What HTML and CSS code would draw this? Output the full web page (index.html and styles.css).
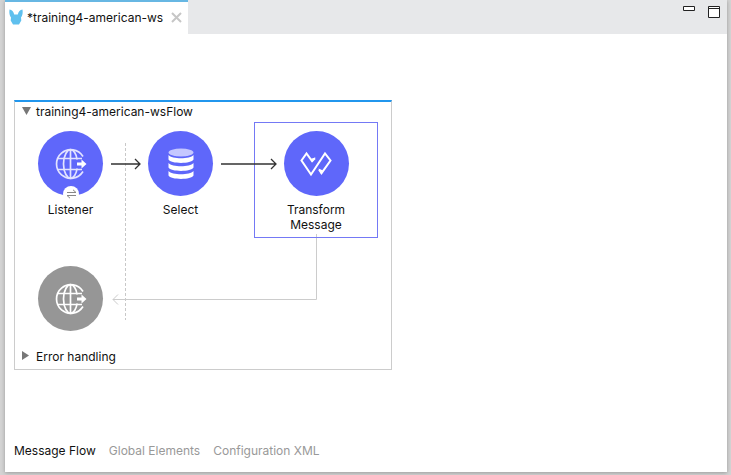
FILE: index.html
```html
<!DOCTYPE html>
<html lang="en">
<head>
<meta charset="utf-8">
<title>training4-american-ws</title>
<link rel="stylesheet" href="styles.css">
</head>
<body>
<svg class="symbols" aria-hidden="true">
  <symbol id="globe" viewBox="0 0 32 32">
    <g fill="none" stroke="currentColor" stroke-width="1.7">
      <path d="M28 8.500A14.300 14.300 0 1 0 28 23.500"/>
      <path d="M22 11.500C21.500 6 18.500 1.700 15.500 1.700S8.500 7 8.500 16s4 14.300 7 14.300S21.500 26 22 20.500"/>
      <path d="M15.500 1.700v28.600M3 10.500h24M3 21.500h24"/>
    </g>
    <path fill="#fff" d="M22 14.500h4.500v-3L31.500 16l-5 4.500v-3H22z"/>
  </symbol>
</svg>
<div class="editor">
  <header class="tabbar">
    <div class="tab">
      <svg class="mule" viewBox="0 0 14 16" aria-hidden="true"><path fill="#5fc0ee" d="M.5.500C3 .8 4.500 2.500 5.200 5.500h3.600C9.500 2.500 11 .8 13.500.500 14 4 13.500 6.500 12 8.500l.3 3L10 15.500H4L1.700 11.500l.3-3C.5 6.500 0 4 .5.500z"/></svg>
      <span>*training4-american-ws</span>
      <button class="icon-button close" aria-label="Close tab"><svg width="11" height="11" viewBox="0 0 11 11"><path d="M1 1l9 9M10 1l-9 9" stroke="#c6c6c6" stroke-width="2"/></svg></button>
    </div>
    <div class="window-actions">
      <button class="icon-button" aria-label="Minimize"><svg width="12" height="12" viewBox="0 0 12 12"><path d="M.5.500h11v4H.500z" fill="#fff" stroke="#222"/></svg></button>
      <button class="icon-button" aria-label="Maximize"><svg width="12" height="12" viewBox="0 0 12 12"><path d="M.5.500h11v11H.500zM.5 2.500h11" fill="#fff" stroke="#222"/></svg></button>
    </div>
  </header>
  <main class="workspace">
    <section class="flow">
      <button class="section-title"><svg width="9" height="8" viewBox="0 0 9 8"><path d="M0 0h9L4.500 8z" fill="#777"/></svg>training4-american-wsFlow</button>
      <div class="canvas">
        <svg class="wires" viewBox="0 0 376 223" aria-hidden="true">
          <g fill="none">
            <path d="M110.500 21v177" stroke="#c8c8c8" stroke-dasharray="3 2"/>
            <path d="M301.500 112v65.500H98M103 172.500l-5 5 5 5" stroke="#ccc"/>
          </g>
        </svg>
        <div class="node listener">
          <div class="disc"><svg width="32" height="32"><use href="#globe"/></svg>
            <span class="badge"><svg width="11" height="10" viewBox="0 0 11 10"><path d="M1 3.500h9L7 .8M10 6.500H1l3 2.700" fill="none" stroke="#888"/></svg></span>
          </div>
          <span>Listener</span>
        </div>
        <div class="node select">
          <div class="disc"><svg width="26" height="32" viewBox="0 0 26 32"><ellipse cx="13" cy="4.500" rx="12.500" ry="4" fill="#c5c7ff"/><g fill="#fff"><path id="band" d="M.5 7C4 11.300 22 11.300 25.500 7v4.500c-2 4.500-23 4.500-25 0z"/><use href="#band" y="8"/><use href="#band" y="16"/></g></svg></div>
          <span>Select</span>
        </div>
        <div class="node transform">
          <div class="disc"><svg width="32" height="26" viewBox="0 0 32 26"><path d="M15 7.200L12 10 6.500 2.500 1.500 9.500 11 23.500 25 2.500l5.500 7-9 12.700L19 18.500" fill="none" stroke="#fff" stroke-width="2"/><path d="M10 8l5.500-1.500-3 5zM18.500 17.500l4.500 2-2 3.500z" fill="#fff"/></svg></div>
          <span>Transform Message</span>
        </div>
        <div class="node response">
          <div class="disc"><svg width="32" height="32"><use href="#globe"/></svg></div>
        </div>
        <svg class="wires" viewBox="0 0 376 223" aria-hidden="true">
          <path d="M96 42h29M120 37l5 5-5 5M206 42h55M256 37l5 5-5 5" fill="none" stroke="#333" stroke-width="1.300"/>
        </svg>
      </div>
      <button class="section-title"><svg width="9" height="10" viewBox="0 0 9 10"><path d="M0 0v9l7-4.500z" fill="#777"/></svg>Error handling</button>
    </section>
  </main>
  <nav class="views">
    <a class="current" href="#flow">Message Flow</a>
    <a href="#elements">Global Elements</a>
    <a href="#xml">Configuration XML</a>
  </nav>
</div>
</body>
</html>
```
FILE: styles.css
```css
* { box-sizing: border-box; }

body {
  margin: 0;
  display: flex;
  min-height: 100vh;
  padding: 0 4px 3px 5px;
  background: #d4d4d4;
  color: #111;
  font: 12px/15px Inter, "Liberation Sans", sans-serif;
}

button { font: inherit; color: inherit; background: none; border: 0; padding: 0; }
svg { display: block; flex: none; }
.symbols { position: absolute; width: 0; height: 0; }

.editor {
  flex: 1;
  display: flex;
  flex-direction: column;
  background: #fff;
  box-shadow: 0 1px 4px #999;
}

.tabbar {
  display: flex;
  justify-content: space-between;
  height: 34px;
  background: #e7e8ea;
}
.tab {
  display: flex;
  align-items: center;
  gap: 4px;
  padding: 0 6px 2px 4px;
  background: #fff;
  border-top: 2px solid #67b7e3;
}
.mule { width: 14px; height: 16px; }
.close { margin-left: 4px; }
.window-actions {
  display: flex;
  align-items: flex-start;
  gap: 13px;
  padding: 6px 7px;
}

.workspace { flex: 1; padding: 66px 9px 0; }
.flow {
  width: 378px;
  border: 1px solid #ccc;
  border-top: 2px solid #2196ed;
}
.section-title {
  display: flex;
  align-items: center;
  gap: 5px;
  height: 20px;
  padding: 0 7px 2px;
}

.canvas { position: relative; height: 223px; }
.canvas + .section-title { height: 24px; }
.wires { position: absolute; inset: 0; width: 376px; height: 223px; }

.node {
  position: absolute;
  top: 9px;
  display: flex;
  flex-direction: column;
  align-items: center;
  gap: 6px;
  width: 65px;
  text-align: center;
}
.disc {
  flex: none;
  position: relative;
  display: grid;
  place-items: center;
  width: 65px;
  height: 65px;
  border-radius: 50%;
  background: #5f67fa;
  color: #e2e3ff;
}
.listener { left: 23px; }
.select { left: 133px; }
.transform {
  left: 239px;
  top: 0;
  width: 124px;
  height: 116px;
  padding: 8px 28px 0;
  border: 1px solid #7479f5;
}
.response { left: 23px; top: 144px; }
.response .disc { background: #969696; color: #fff; }
.badge {
  position: absolute;
  left: 25px;
  bottom: -6px;
  display: grid;
  place-items: center;
  width: 16px;
  height: 16px;
  border-radius: 50%;
  background: #fff;
}

.views { display: flex; gap: 13px; padding: 0 9px 14px; }
.views a { color: #999; text-decoration: none; }
.views .current { color: #111; }
```
